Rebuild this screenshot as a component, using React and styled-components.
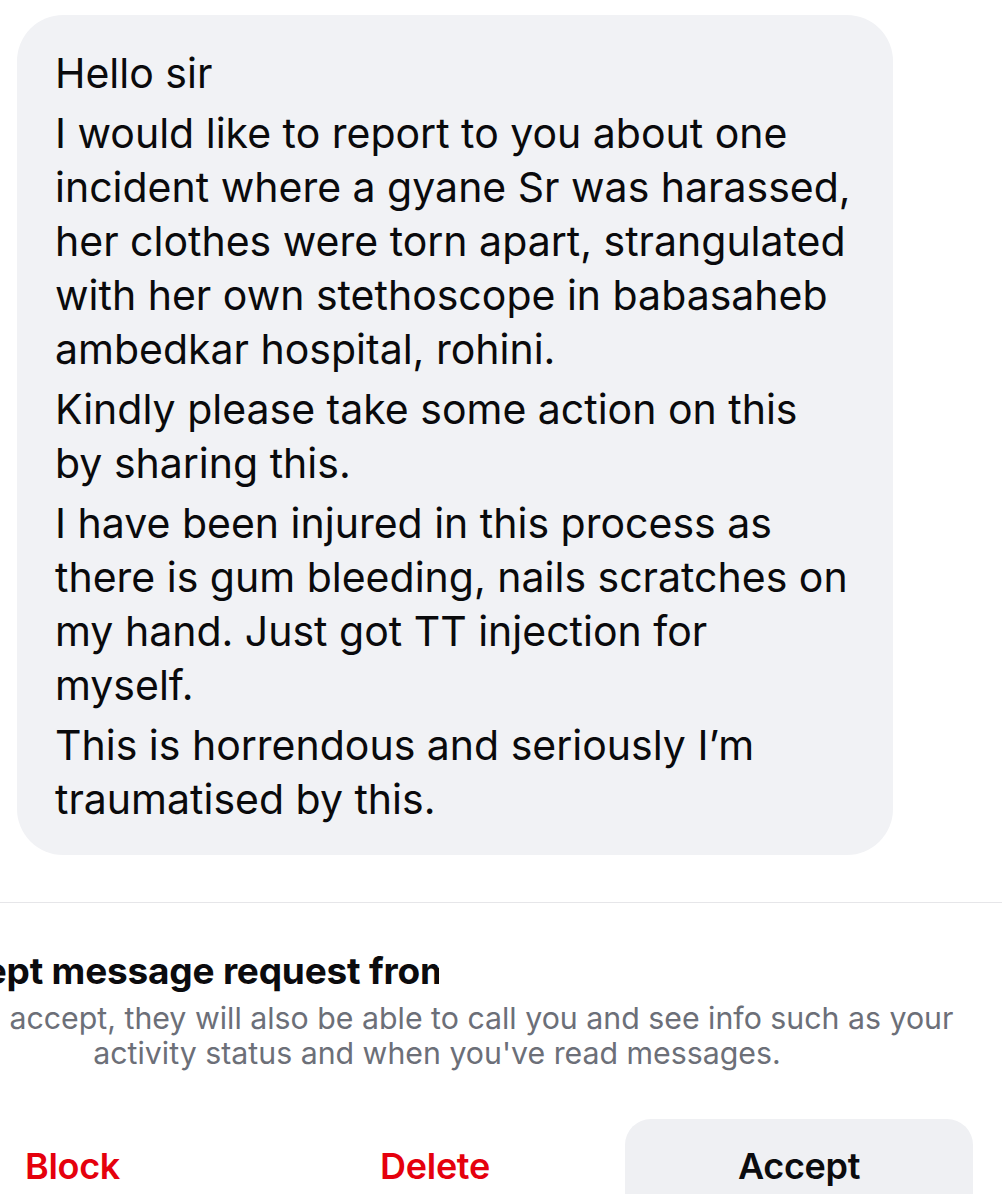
import React from "react";
import styled, { createGlobalStyle } from "styled-components";

const GlobalStyle = createGlobalStyle`
  html, body {
    margin: 0;
    padding: 0;
    background: #ffffff;
    overflow: hidden;
  }
  body {
    font-family: Inter, "Noto Sans", "Liberation Sans", sans-serif;
    -webkit-font-smoothing: antialiased;
  }
`;

const Page = styled.div`
  width: 1002px;
  height: 1194px;
  overflow: hidden;
  display: flex;
  flex-direction: column;
  background: #ffffff;
`;

const Thread = styled.div`
  padding: 15px 0 47px 17px;
  border-bottom: 1.5px solid #e6e6e9;
`;

const Bubble = styled.div`
  width: 876px;
  box-sizing: border-box;
  background: #f1f2f5;
  border-radius: 46px;
  padding: 31px 20px 29px 38px;
  color: #0a0a0c;
  font-size: 41px;
  line-height: 54px;
`;

const Para = styled.p`
  margin: 0 0 6px;

  &:last-child {
    margin-bottom: 0;
  }
`;

const Line = styled.span`
  display: block;
  white-space: nowrap;
`;

const Request = styled.div`
  display: flex;
  flex-direction: column;
  padding-top: 46px;
`;

const TitleClip = styled.div`
  width: 439px;
  overflow: hidden;
  white-space: nowrap;
`;

const Title = styled.h2`
  margin: 0 0 0 -85px;
  font-size: 37px;
  line-height: 44px;
  font-weight: 700;
  color: #0b0b0e;
  letter-spacing: -0.2px;
`;

const Notice = styled.p`
  margin: 8px 0 0 -98px;
  width: 1070px;
  text-align: center;
  font-size: 30.3px;
  line-height: 35px;
  color: #6c6f78;
`;

const Actions = styled.div`
  display: flex;
  align-items: flex-start;
  gap: 25px;
  margin-top: 48px;
`;

const TextAction = styled.button`
  width: ${({ width }) => width}px;
  height: 94px;
  border: 0;
  background: transparent;
  padding: 0 0 0 ${({ inset }) => inset || 0}px;
  text-align: ${({ align }) => align || "center"};
  font-family: inherit;
  font-size: 36px;
  font-weight: 600;
  color: #e5000d;
  letter-spacing: -0.3px;
`;

const AcceptButton = styled.button`
  width: 348px;
  height: 100px;
  border: 0;
  border-radius: 26px;
  background: #eff0f3;
  padding: 0 0 6px;
  font-family: inherit;
  font-size: 36px;
  font-weight: 600;
  color: #0b0b0e;
  letter-spacing: -0.3px;
`;

// wrapped as in the screenshot
const paragraphs = [
  ["Hello sir"],
  [
    "I would like to report to you about one",
    "incident where a gyane Sr was harassed,",
    "her clothes were torn apart, strangulated",
    "with her own stethoscope in babasaheb",
    "ambedkar hospital, rohini.",
  ],
  ["Kindly please take some action on this", "by sharing this."],
  [
    "I have been injured in this process as",
    "there is gum bleeding, nails scratches on",
    "my hand. Just got TT injection for",
    "myself.",
  ],
  ["This is horrendous and seriously I\u2019m", "traumatised by this."],
];

export default function App() {
  return (
    <Page>
      <GlobalStyle />
      <Thread>
        <Bubble>
          {paragraphs.map((lines) => (
            <Para key={lines[0]}>
              {lines.map((line) => (
                <Line key={line}>{line}</Line>
              ))}
            </Para>
          ))}
        </Bubble>
      </Thread>
      <Request>
        <TitleClip>
          <Title>Accept message request from</Title>
        </TitleClip>
        <Notice>
          If you accept, they will also be able to call you and see info such as your
          activity status and when you've read messages.
        </Notice>
        <Actions>
          <TextAction width={245} align="left" inset={25}>
            Block
          </TextAction>
          <TextAction width={330}>Delete</TextAction>
          <AcceptButton>Accept</AcceptButton>
        </Actions>
      </Request>
    </Page>
  );
}
